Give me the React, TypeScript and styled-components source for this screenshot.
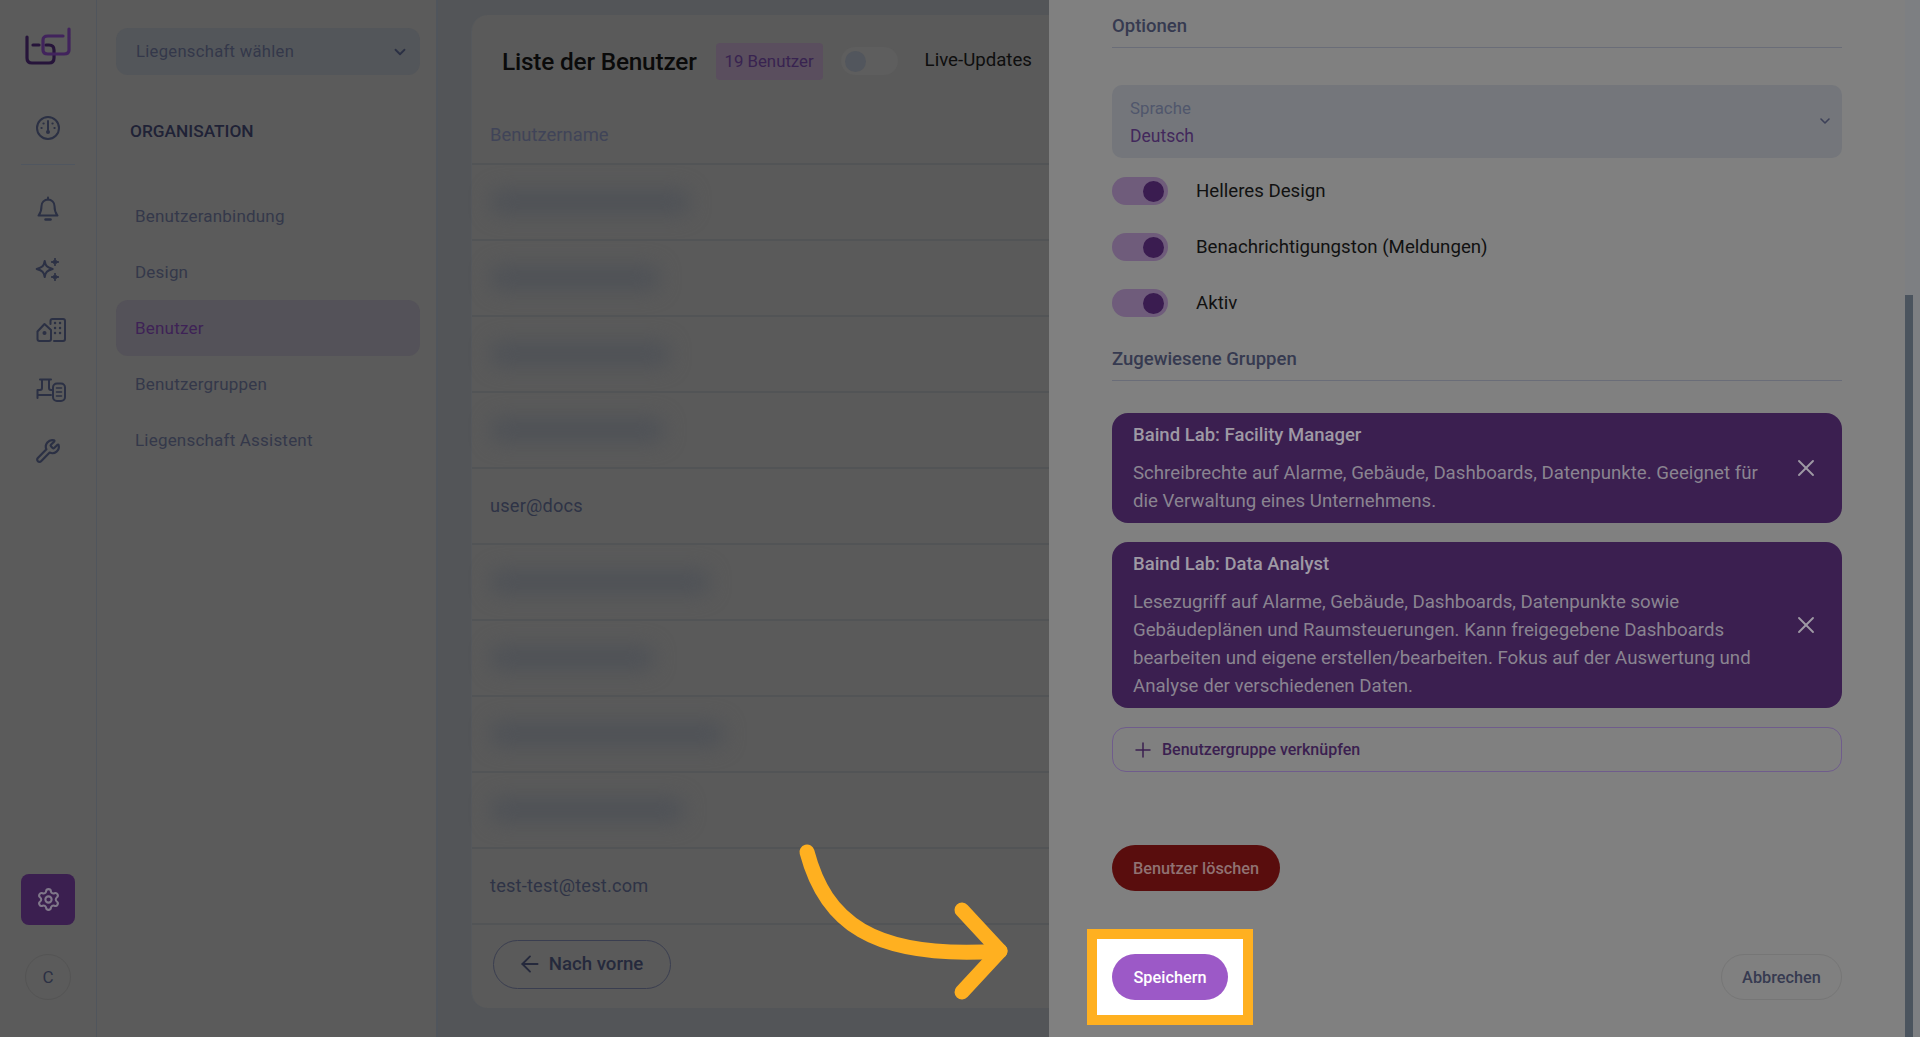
import React from "react";
import styled, { createGlobalStyle } from "styled-components";
import { Settings, Wrench, ChevronDown, ArrowLeft, X, Plus } from "lucide-react";

const Global = createGlobalStyle`
  html, body { margin: 0; padding: 0; height: 100%; overflow: hidden; background: #808080; }
  #root { height: 100%; }
  * { box-sizing: border-box; }
  body { font-family: Roboto, "Liberation Sans", sans-serif; }
`;

const Page = styled.div`
  position: relative;
  display: flex;
  width: 1920px;
  height: 1037px;
  overflow: hidden;
`;

const Rail = styled.nav`
  flex: 0 0 97px;
  display: flex;
  flex-direction: column;
  align-items: center;
  background: #5b5b5b;
  border-right: 1px solid #50555c;
  padding: 27px 0 37px;
  color: #2b3044;
`;

const Logo = styled.svg`
  width: 46px;
  height: 40px;
  margin-bottom: 31px;
`;

const RailIcon = styled.div<{ $shift?: boolean }>`
  width: 54px;
  height: 60.5px;
  display: flex;
  align-items: center;
  justify-content: center;
  padding-left: ${(p) => (p.$shift ? "6px" : "0")};
`;

const RailDivider = styled.div`
  width: 54px;
  height: 1px;
  background: #50565f;
  margin: 5px 0 14px;
`;

const RailSpacer = styled.div`
  flex: 1;
`;

const SettingsButton = styled.div`
  width: 54px;
  height: 51px;
  border-radius: 8px;
  background: #3b1f50;
  color: #80788a;
  display: flex;
  align-items: center;
  justify-content: center;
  margin-bottom: 29px;
`;

const Avatar = styled.div`
  width: 46px;
  height: 46px;
  border-radius: 50%;
  border: 1px solid #545454;
  display: flex;
  align-items: center;
  justify-content: center;
  font-size: 17px;
  color: #2b3044;
`;

const SubNav = styled.aside`
  flex: 0 0 341px;
  background: #5b5b5b;
  border-right: 2px solid #50555c;
  padding: 28px 16px 0 19px;
`;

const PropertySelect = styled.div`
  height: 47px;
  border-radius: 12px;
  background: #53565a;
  display: flex;
  align-items: center;
  justify-content: space-between;
  padding: 0 11px 0 20px;
  font-size: 16.6px;
  color: #34384a;
  letter-spacing: 0.3px;
`;

const SectionTitle = styled.h2`
  margin: 43px 0 44px 14px;
  font-size: 17.3px;
  line-height: 26px;
  font-weight: 500;
  color: #1f2236;
`;

const NavItem = styled.div<{ $active?: boolean }>`
  height: 56px;
  border-radius: 12px;
  display: flex;
  align-items: center;
  padding-left: 19px;
  font-size: 17px;
  letter-spacing: 0.2px;
  color: ${(p) => (p.$active ? "#3e2256" : "#34384a")};
  background: ${(p) => (p.$active ? "#545259" : "transparent")};
`;

const Main = styled.main`
  flex: 0 0 611px;
  background: #535558;
  padding: 15px 0 29px 33px;
  display: flex;
`;

const Card = styled.section`
  flex: 1;
  background: #5a5a5a;
  border-radius: 16px 0 0 16px;
  display: flex;
  flex-direction: column;
  border-left: 1px solid #55585c;
`;

const CardHead = styled.header`
  height: 92px;
  display: flex;
  align-items: center;
  padding: 0 0 0 30px;
`;

const CardTitle = styled.h1`
  margin: 0 19px 0 0;
  font-size: 24.4px;
  font-weight: 500;
  color: #0a0a0a;
  letter-spacing: -0.2px;
`;

const CountBadge = styled.span`
  width: 107px;
  height: 37px;
  border-radius: 4px;
  background: #5a4e5e;
  color: #382350;
  font-size: 16.8px;
  display: flex;
  align-items: center;
  justify-content: center;
  margin-right: 18px;
`;

const OffSwitch = styled.span`
  width: 57px;
  height: 28px;
  border-radius: 14px;
  background: #5e5e5e;
  display: flex;
  align-items: center;
  padding-left: 4px;
  margin-right: 27px;
  &::before {
    content: "";
    width: 21px;
    height: 21px;
    border-radius: 50%;
    background: #52565d;
  }
`;

const LiveLabel = styled.span`
  font-size: 18.67px;
  color: #0e0e0e;
  margin-top: -3px;
`;

const ColumnHead = styled.div`
  height: 58px;
  display: flex;
  align-items: center;
  padding: 0 0 2px 18px;
  font-size: 18.4px;
  color: #404458;
  border-bottom: 2px solid #525456;
`;

const Row = styled.div`
  height: 76px;
  display: flex;
  align-items: center;
  padding: 0 0 1px 18px;
  border-bottom: 2px solid #525456;
  font-size: 18.2px;
  color: #2e3346;
  letter-spacing: 0.2px;
`;

const BlurredName = styled.div<{ $w: number }>`
  width: ${(p) => p.$w}px;
  height: 26px;
  border-radius: 13px;
  background: #4f5257;
  filter: blur(10px);
`;

const CardFoot = styled.div`
  flex: 1;
  display: flex;
  align-items: center;
  padding: 0 0 5px 21px;
`;

const BackButton = styled.div`
  width: 178px;
  height: 49px;
  border-radius: 25px;
  border: 1px solid #3a3e50;
  display: flex;
  align-items: center;
  justify-content: center;
  gap: 6px;
  padding-right: 4px;
  font-size: 18.67px;
  font-weight: 500;
  color: #25293c;
`;

const Drawer = styled.aside`
  position: relative;
  flex: 1;
  background: #808080;
  padding: 0 78px 0 63px;
  display: flex;
  flex-direction: column;
`;

const DrawerHeading = styled.h3<{ $top: number }>`
  margin: ${(p) => p.$top}px 0 0;
  height: 35px;
  font-size: 18.5px;
  line-height: 26px;
  font-weight: 500;
  color: #363a50;
  border-bottom: 1px solid #6a6d78;
`;

const LanguageSelect = styled.div`
  position: relative;
  height: 73px;
  margin-top: 37px;
  margin-bottom: 19px;
  background: #74767b;
  border-radius: 10px;
  padding: 13px 18px;
`;

const FieldLabel = styled.div`
  font-size: 16.8px;
  line-height: 20px;
  color: #50566c;
`;

const FieldValue = styled.div`
  font-size: 17.5px;
  line-height: 24px;
  margin-top: 6px;
  color: #42285c;
`;

const ChevronSlot = styled.span`
  position: absolute;
  right: 9px;
  top: 28px;
  display: flex;
`;

const OptionRow = styled.div`
  height: 56px;
  display: flex;
  align-items: center;
  gap: 28px;
  font-size: 18.67px;
  color: #111;
`;

const OnSwitch = styled.span`
  width: 56px;
  height: 28px;
  border-radius: 14px;
  background: #6f5c7b;
  display: flex;
  align-items: center;
  justify-content: flex-end;
  padding-right: 4px;
  &::after {
    content: "";
    width: 21px;
    height: 21px;
    border-radius: 50%;
    background: #3a1c50;
  }
`;

const OptionStack = styled.div`
  margin-top: -14px;
`;

const GroupList = styled.div`
  margin-top: 32px;
`;

const GroupCard = styled.div<{ $h: number }>`
  height: ${(p) => p.$h}px;
  background: #3b1f50;
  border-radius: 16px;
  margin-bottom: 19px;
  padding: 9px 22px 0 21px;
  display: flex;
  align-items: center;
  justify-content: space-between;
  gap: 27px;
  color: #8a8490;
`;

const GroupBody = styled.div`
  align-self: flex-start;
  flex: 1;
`;

const GroupTitle = styled.div`
  font-size: 18.5px;
  line-height: 26px;
  font-weight: 500;
  color: #9e99a4;
  margin-bottom: 11px;
`;

const GroupText = styled.div`
  font-size: 18.67px;
  line-height: 28px;
`;

const CloseIcon = styled(X)`
  margin-top: -9px;
  flex: none;
`;

const AddButton = styled.div`
  height: 45px;
  border: 1px solid #6f5c8c;
  border-radius: 14px;
  display: flex;
  align-items: center;
  padding-left: 18px;
  gap: 7px;
  font-size: 16px;
  font-weight: 500;
  color: #3b1f50;
`;

const Pill = styled.div<{ $bg: string; $fg: string; $w: number; $line?: string }>`
  width: ${(p) => p.$w}px;
  height: 46px;
  border-radius: 23px;
  background: ${(p) => p.$bg};
  color: ${(p) => p.$fg};
  border: ${(p) => (p.$line ? `1px solid ${p.$line}` : "none")};
  display: flex;
  align-items: center;
  justify-content: center;
  font-size: 16.3px;
  font-weight: 500;
`;

const DeleteRow = styled.div`
  margin-top: 73px;
`;

const FooterRow = styled.div`
  margin-top: 63px;
  display: flex;
  justify-content: space-between;
  align-items: center;
`;

const HighlightFrame = styled.div`
  margin: -25px;
  padding: 15px;
  border: 10px solid #ffb020;
  background: #fff;
`;

const ScrollTrack = styled.div`
  position: absolute;
  top: 0;
  right: 0;
  bottom: 0;
  width: 15px;
  background: #7d7f82;
`;

const ScrollThumb = styled.div`
  position: absolute;
  top: 295px;
  bottom: 0;
  left: 0;
  width: 8px;
  background: #4b545e;
`;

const CalloutArrow = styled.svg`
  position: absolute;
  left: 790px;
  top: 835px;
  width: 230px;
  height: 175px;
  pointer-events: none;
`;

const GaugeIcon = () => (
  <svg width="26" height="26" viewBox="0 0 26 26" fill="none" stroke="currentColor" strokeWidth="2" strokeLinecap="round">
    <circle cx="13" cy="13" r="11" />
    <path d="M13 6v9" />
    <circle cx="13" cy="17" r="2" fill="currentColor" stroke="none" />
    <path d="M6.500 13h.1M8.500 8.500h.1M17.500 8.500h.1M19.500 13h.1" strokeWidth="2.200" />
  </svg>
);

const BellIcon = () => (
  <svg width="24" height="26" viewBox="0 0 24 26" fill="none" stroke="currentColor" strokeWidth="2" strokeLinecap="round" strokeLinejoin="round">
    <path d="M12 1.500v2" />
    <path d="M5.500 10a6.500 6.500 0 0 1 13 0c0 6 1.500 7.500 3 9.500H2.500c1.500-2 3-3.500 3-9.500Z" />
    <path d="M9.500 23.500h5" strokeWidth="2.500" />
  </svg>
);

const SparkIcon = () => (
  <svg width="26" height="26" viewBox="0 0 26 26" fill="none" stroke="currentColor" strokeWidth="2" strokeLinejoin="round">
    <path d="M9.700 5C10.500 10 12 11.500 17.700 13 12 14.500 10.500 16 9.700 21 8.900 16 7.400 14.500 1.700 13 7.400 11.500 8.900 10 9.700 5Z" />
    <path d="M20 2c.4 2.500 1 3.300 4 4-3 .7-3.600 1.500-4 4-.4-2.500-1-3.300-4-4 3-.7 3.600-1.500 4-4Z" fill="currentColor" strokeWidth="1" />
    <path d="M20 17c.4 2.500 1 3.300 4 4-3 .7-3.600 1.500-4 4-.4-2.500-1-3.300-4-4 3-.7 3.600-1.500 4-4Z" fill="currentColor" strokeWidth="1" />
  </svg>
);

const BuildingIcon = () => (
  <svg width="30" height="24" viewBox="0 0 30 24" fill="none" stroke="currentColor" strokeWidth="2" strokeLinejoin="round" strokeLinecap="round">
    <path d="M1.500 13.500L8.500 6 15 12V21a2 2 0 0 1-2 2H3.500a2 2 0 0 1-2-2Z" />
    <circle cx="8.500" cy="15" r="2" fill="currentColor" stroke="none" />
    <path d="M14.500 6V3a2 2 0 0 1 2-2H27a2 2 0 0 1 2 2v18a2 2 0 0 1-2 2h-9" />
    <path d="M19 5h.1M24 5h.1M19 10h.1M24 10h.1M19 15h.1M24 15h.1" strokeWidth="2.400" />
  </svg>
);

const PlantIcon = () => (
  <svg width="30" height="24" viewBox="0 0 30 24" fill="none" stroke="currentColor" strokeWidth="2" strokeLinejoin="round" strokeLinecap="round">
    <path d="M4 1.500H15M6 1.500V10Q6 12 4 12H1.500V20M1.500 17H15M13 1.500V10Q13 12 15 12H16" />
    <rect x="17" y="5.500" width="12" height="17.500" rx="4" />
    <path d="M20.500 10h5M20.500 14h5M20.500 18h5" strokeWidth="1.600" />
  </svg>
);

const rows: Array<{ w?: number; text?: string }> = [
  { w: 200 },
  { w: 170 },
  { w: 180 },
  { w: 175 },
  { text: "user@docs" },
  { w: 220 },
  { w: 165 },
  { w: 235 },
  { w: 195 },
  { text: "test-test@test.com" },
];

export default function App() {
  return (
    <Page>
      <Global />
      <Rail>
        <Logo viewBox="0 0 46 40" fill="none" strokeWidth="3.200" strokeLinecap="round">
          <path d="M2 10V31Q2 36 7 36H24Q29 36 29 31V23Q29 18 24 18H21M8 18H14" stroke="#26143a" />
          <path d="M44 2V23Q44 27 39 27H23Q18 27 18 23V13Q18 9 23 9H38" stroke="#41235c" />
        </Logo>
        <RailIcon><GaugeIcon /></RailIcon>
        <RailDivider />
        <RailIcon><BellIcon /></RailIcon>
        <RailIcon><SparkIcon /></RailIcon>
        <RailIcon $shift><BuildingIcon /></RailIcon>
        <RailIcon $shift><PlantIcon /></RailIcon>
        <RailIcon><Wrench size={26} strokeWidth={2} /></RailIcon>
        <RailSpacer />
        <SettingsButton><Settings size={25} strokeWidth={2} /></SettingsButton>
        <Avatar>C</Avatar>
      </Rail>

      <SubNav>
        <PropertySelect>
          Liegenschaft wählen
          <ChevronDown size={18} strokeWidth={2.4} color="#2b3044" />
        </PropertySelect>
        <SectionTitle>ORGANISATION</SectionTitle>
        <NavItem>Benutzeranbindung</NavItem>
        <NavItem>Design</NavItem>
        <NavItem $active>Benutzer</NavItem>
        <NavItem>Benutzergruppen</NavItem>
        <NavItem>Liegenschaft Assistent</NavItem>
      </SubNav>

      <Main>
        <Card>
          <CardHead>
            <CardTitle>Liste der Benutzer</CardTitle>
            <CountBadge>19 Benutzer</CountBadge>
            <OffSwitch />
            <LiveLabel>Live-Updates</LiveLabel>
          </CardHead>
          <ColumnHead>Benutzername</ColumnHead>
          {rows.map((r, i) => (
            <Row key={i}>{r.text ? r.text : <BlurredName $w={r.w as number} />}</Row>
          ))}
          <CardFoot>
            <BackButton>
              <ArrowLeft size={26} strokeWidth={1.7} />
              Nach vorne
            </BackButton>
          </CardFoot>
        </Card>
      </Main>

      <Drawer>
        <DrawerHeading $top={13}>Optionen</DrawerHeading>
        <LanguageSelect>
          <FieldLabel>Sprache</FieldLabel>
          <FieldValue>Deutsch</FieldValue>
          <ChevronSlot><ChevronDown size={16} strokeWidth={2.4} color="#3c4058" /></ChevronSlot>
        </LanguageSelect>
        <OptionStack>
          <OptionRow><OnSwitch />Helleres Design</OptionRow>
          <OptionRow><OnSwitch />Benachrichtigungston (Meldungen)</OptionRow>
          <OptionRow><OnSwitch />Aktiv</OptionRow>
        </OptionStack>
        <DrawerHeading $top={15}>Zugewiesene Gruppen</DrawerHeading>
        <GroupList>
          <GroupCard $h={110}>
            <GroupBody>
              <GroupTitle>Baind Lab: Facility Manager</GroupTitle>
              <GroupText>Schreibrechte auf Alarme, Gebäude, Dashboards, Datenpunkte. Geeignet für die Verwaltung eines Unternehmens.</GroupText>
            </GroupBody>
            <CloseIcon size={28} strokeWidth={1.6} color="#9e99a4" />
          </GroupCard>
          <GroupCard $h={166}>
            <GroupBody>
              <GroupTitle>Baind Lab: Data Analyst</GroupTitle>
              <GroupText>Lesezugriff auf Alarme, Gebäude, Dashboards, Datenpunkte sowie Gebäudeplänen und Raumsteuerungen. Kann freigegebene Dashboards bearbeiten und eigene erstellen/bearbeiten. Fokus auf der Auswertung und Analyse der verschiedenen Daten.</GroupText>
            </GroupBody>
            <CloseIcon size={28} strokeWidth={1.6} color="#9e99a4" />
          </GroupCard>
        </GroupList>
        <AddButton>
          <Plus size={24} strokeWidth={1.5} color="#3b1f50" />
          Benutzergruppe verknüpfen
        </AddButton>
        <DeleteRow>
          <Pill $w={168} $bg="#590d0d" $fg="#907272">Benutzer löschen</Pill>
        </DeleteRow>
        <FooterRow>
          <HighlightFrame>
            <Pill $w={116} $bg="#9c59c7" $fg="#ffffff">Speichern</Pill>
          </HighlightFrame>
          <Pill $w={121} $bg="transparent" $fg="#363a50" $line="#767676">Abbrechen</Pill>
        </FooterRow>
        <ScrollTrack><ScrollThumb /></ScrollTrack>
      </Drawer>

      <CalloutArrow viewBox="0 0 230 175" fill="none" stroke="#ffb020" strokeWidth="15" strokeLinecap="round" strokeLinejoin="round">
        <path d="M17 17C35 85 80 125 210 116" />
        <path d="M172 75L210 116L172 157" />
      </CalloutArrow>
    </Page>
  );
}
